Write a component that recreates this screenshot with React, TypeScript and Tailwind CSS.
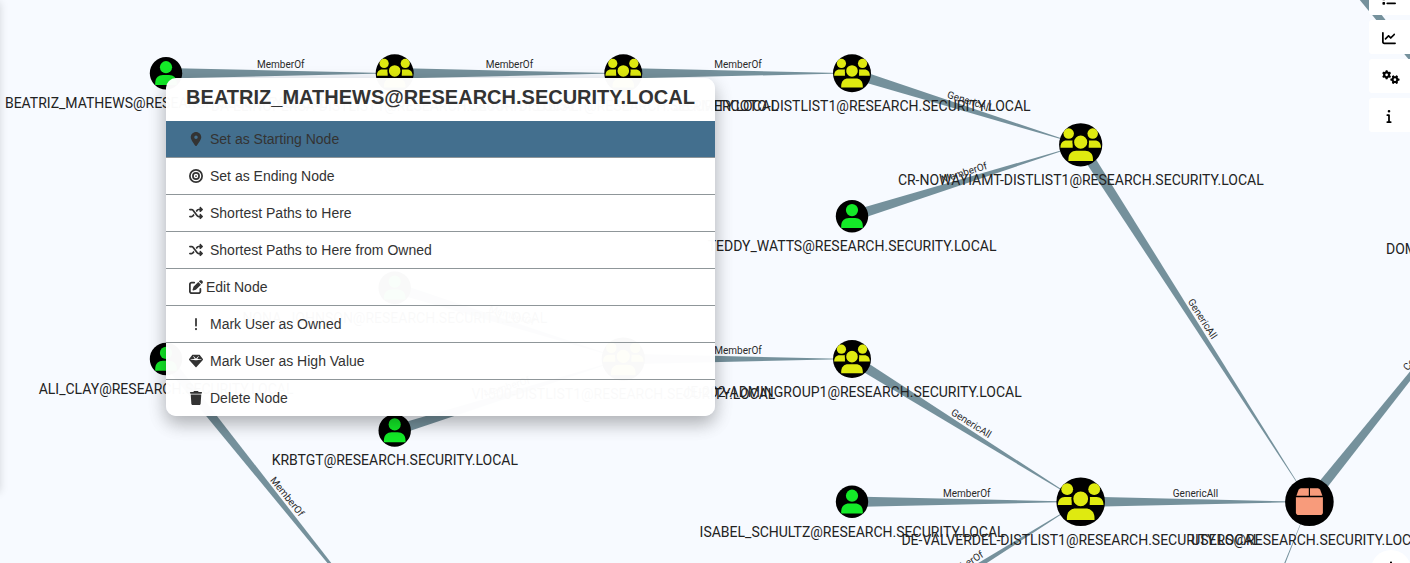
import React from "react";
import {
  FaLocationDot,
  FaBullseye,
  FaShuffle,
  FaPenToSquare,
  FaExclamation,
  FaGem,
  FaTrash,
  FaChartLine,
  FaGears,
  FaInfo,
  FaList,
  FaPlus,
} from "react-icons/fa6";

type Kind = "user" | "group" | "box";
type GraphNode = { x: number; y: number; r: number; kind: Kind; label: string };
type Edge = { from: [number, number]; to: [number, number]; label?: string };

const DOMAIN = "@RESEARCH.SECURITY.LOCAL";

const nodes: GraphNode[] = [
  { x: 166, y: 73.3, r: 16.2, kind: "user", label: "BEATRIZ_MATHEWS" + DOMAIN },
  { x: 394.7, y: 73.3, r: 19, kind: "group", label: "DA-ELINOPERSA-DISTLIST1" + DOMAIN },
  { x: 623.3, y: 73.3, r: 19, kind: "group", label: "CA-ART-DISTLIST1" + DOMAIN },
  { x: 852, y: 73.3, r: 19, kind: "group", label: "JE-RMERCOTO-DISTLIST1" + DOMAIN },
  { x: 1080.7, y: 144.8, r: 21.6, kind: "group", label: "CR-NOWAYIAMT-DISTLIST1" + DOMAIN },
  { x: 852, y: 216.2, r: 16.2, kind: "user", label: "TEDDY_WATTS" + DOMAIN },
  { x: 394.7, y: 287.7, r: 16.2, kind: "user", label: "NONA_JOHNSON" + DOMAIN },
  { x: 166, y: 359, r: 16.2, kind: "user", label: "ALI_CLAY" + DOMAIN },
  { x: 623.3, y: 359, r: 21.6, kind: "group", label: "VI-500-DISTLIST1" + DOMAIN },
  { x: 852, y: 359, r: 19, kind: "group", label: "JE-202-ADMINGROUP1" + DOMAIN },
  { x: 394.7, y: 430.5, r: 16.2, kind: "user", label: "KRBTGT" + DOMAIN },
  { x: 852, y: 501.8, r: 16.2, kind: "user", label: "ISABEL_SCHULTZ" + DOMAIN },
  { x: 1080.7, y: 501.8, r: 24.3, kind: "group", label: "DE-VALVERDEL-DISTLIST1" + DOMAIN },
  { x: 1309.4, y: 501.8, r: 24.3, kind: "box", label: "USERS" + DOMAIN },
];

const edges: Edge[] = [
  { from: [166, 73.3], to: [394.7, 73.3], label: "MemberOf" },
  { from: [394.7, 73.3], to: [623.3, 73.3], label: "MemberOf" },
  { from: [623.3, 73.3], to: [852, 73.3], label: "MemberOf" },
  { from: [852, 73.3], to: [1080.7, 144.8], label: "GenericAll" },
  { from: [852, 216.2], to: [1080.7, 144.8], label: "MemberOf" },
  { from: [1080.7, 144.8], to: [1309.4, 501.8], label: "GenericAll" },
  { from: [394.7, 287.7], to: [623.3, 359], label: "MemberOf" },
  { from: [394.7, 430.5], to: [623.3, 359], label: "MemberOf" },
  { from: [623.3, 359], to: [852, 359], label: "MemberOf" },
  { from: [852, 359], to: [1080.7, 501.8], label: "GenericAll" },
  { from: [166, 359], to: [394.7, 644.6], label: "MemberOf" },
  { from: [852, 501.8], to: [1080.7, 501.8], label: "MemberOf" },
  { from: [852, 644.6], to: [1080.7, 501.8], label: "MemberOf" },
  { from: [1080.7, 501.8], to: [1309.4, 501.8], label: "GenericAll" },
  { from: [1309.4, 501.8], to: [1538, 216.2], label: "Contains" },
  { from: [1309.4, -69.5], to: [1538, 216.2] },
  { from: [1080.7, 1073], to: [1309.4, 501.8] },
];

function TaperedEdge({ from, to, label }: Edge) {
  const [x1, y1] = from;
  const [x2, y2] = to;
  const len = Math.hypot(x2 - x1, y2 - y1);
  const nx = (-(y2 - y1) / len) * 5.3;
  const ny = ((x2 - x1) / len) * 5.3;
  const angle = (Math.atan2(y2 - y1, x2 - x1) * 180) / Math.PI;
  return (
    <g>
      <polygon
        points={`${x1 + nx},${y1 + ny} ${x2},${y2} ${x1 - nx},${y1 - ny}`}
        fill="#75919c"
      />
      {label && (
        <text
          transform={`translate(${(x1 + x2) / 2 + 0.4} ${(y1 + y2) / 2}) rotate(${angle})`}
          y={-5}
          textAnchor="middle"
          fontSize={10}
          fill="#2a2a2a"
        >
          {label}
        </text>
      )}
    </g>
  );
}

function NodeGlyph({ x, y, r, kind }: GraphNode) {
  return (
    <g transform={`translate(${x} ${y})`}>
      <circle r={r} fill="#000" />
      {kind === "user" && (
        <g fill="#14ea28">
          <circle cy={-6.1} r={6.1} />
          <path d="M-10.8 11.8 V9.7 C-10.8 4.7 -7.5 1.8 -3 1.8 H3 C7.5 1.8 10.8 4.7 10.8 9.7 V11.8 Z" />
        </g>
      )}
      {kind === "group" && (
        <g transform={`scale(${r / 24.3})`} fill="#dfea10">
          <circle cx={-13.5} cy={-12.6} r={5.9} />
          <circle cx={13.5} cy={-12.6} r={5.9} />
          <path d="M-22.8 3.2 C-22.8 -2 -20 -4.8 -16 -4.8 H-9 V3.2 Z" />
          <path d="M22.8 3.2 C22.8 -2 20 -4.8 16 -4.8 H9 V3.2 Z" />
          <circle cy={-3} r={8.3} stroke="#000" strokeWidth={1.8} />
          <path d="M-13.8 18.2 V16 C-13.8 10 -10 6.6 -5 6.6 H5 C10 6.6 13.8 10 13.8 16 V18.2 Z" />
        </g>
      )}
      {kind === "box" && (
        <g fill="#f89b7b">
          <path d="M-.6 -13.5 V-6 H-13 L-10.8 -12 Q-10 -13.5 -8.4 -13.5 Z" />
          <path d="M.6 -13.5 V-6 H13 L10.8 -12 Q10 -13.5 8.4 -13.5 Z" />
          <path d="M-13.5 -4.6 H13.5 V10.5 Q13.5 13.3 10.7 13.3 H-10.7 Q-13.5 13.3 -13.5 10.5 Z" />
        </g>
      )}
    </g>
  );
}

function Graph() {
  return (
    <svg
      className="block h-[563px] w-[1410px] font-['Roboto',sans-serif]"
      viewBox="0 0 1410 563"
    >
      {edges.map((e, i) => (
        <TaperedEdge key={i} {...e} />
      ))}
      {nodes.map((n) => (
        <NodeGlyph key={n.label} {...n} />
      ))}
      {nodes.map((n) => (
        <text
          key={n.label}
          x={n.x + 0.1}
          y={n.y + n.r + 18.7}
          textAnchor="middle"
          fontSize={14}
          fill="#222"
        >
          {n.label}
        </text>
      ))}
      <text x={1386} y={254} fontSize={14} fill="#222">
        DOMAIN
      </text>
    </svg>
  );
}

const items = [
  { icon: FaLocationDot, text: "Set as Starting Node" },
  { icon: FaBullseye, text: "Set as Ending Node" },
  { icon: FaShuffle, text: "Shortest Paths to Here" },
  { icon: FaShuffle, text: "Shortest Paths to Here from Owned" },
  { icon: FaPenToSquare, text: "Edit Node", tight: true },
  { icon: FaExclamation, text: "Mark User as Owned" },
  { icon: FaGem, text: "Mark User as High Value" },
  { icon: FaTrash, text: "Delete Node" },
];

function NodeMenu() {
  return (
    <div className="absolute top-[78px] left-[166px] flex h-[338px] w-[549px] flex-col overflow-hidden rounded-[10px] bg-white/[0.975] text-[#333] shadow-[0_8px_17px_0_rgba(0,0,0,0.2),0_6px_20px_0_rgba(0,0,0,0.13)]">
      <div className="flex h-[43px] shrink-0 items-center justify-center pb-[6px] text-[20px] font-bold whitespace-nowrap">
        BEATRIZ_MATHEWS@RESEARCH.SECURITY.LOCAL
      </div>
      {items.map(({ icon: Icon, text, tight }, i) => (
        <div
          key={text}
          className={`flex h-[37px] shrink-0 items-center border-b border-[#8f9699] pl-[23px] text-[14px] whitespace-nowrap ${
            i === 0 ? "bg-[#436f8e]" : ""
          }`}
        >
          <Icon className="size-[14px]" />
          <span className={tight ? "ml-[3px]" : "ml-[7px]"}>{text}</span>
        </div>
      ))}
    </div>
  );
}

const tools = [FaList, FaChartLine, FaGears, FaInfo];

function Toolbar() {
  return (
    <div className="absolute top-[-19px] left-[1369px] flex flex-col gap-[5px]">
      {tools.map((Icon, i) => (
        <div
          key={i}
          className="flex h-[34px] w-[44px] items-center rounded-[3px] bg-white pt-px pl-[13px] text-black"
        >
          <Icon className={i === 2 ? "h-[14px] w-[18px]" : "size-[14px]"} />
        </div>
      ))}
    </div>
  );
}

export default function App() {
  return (
    <div className="relative h-[563px] w-full overflow-hidden bg-[#f7faff] font-['Liberation_Sans',Arial,sans-serif]">
      <Graph />
      <div className="absolute top-0 left-[-20px] h-[490px] w-5 shadow-[0_2px_8px_rgba(0,0,0,0.15)]" />
      <Toolbar />
      <div className="absolute top-[550px] left-[1371px] flex size-10 justify-center rounded-full bg-white pt-[10px]">
        <FaPlus className="size-4 text-black" />
      </div>
      <NodeMenu />
    </div>
  );
}
